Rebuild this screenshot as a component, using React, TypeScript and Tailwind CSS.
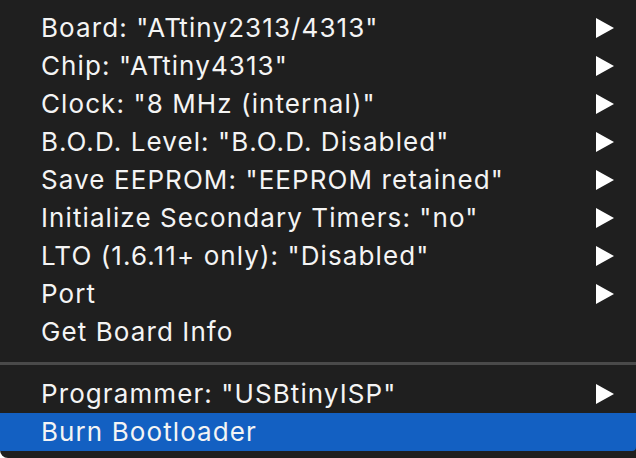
import React from 'react';

const boardItems = [
  { label: 'Board: "ATtiny2313/4313"', sub: true },
  { label: 'Chip: "ATtiny4313"', sub: true },
  { label: 'Clock: "8 MHz (internal)"', sub: true },
  { label: 'B.O.D. Level: "B.O.D. Disabled"', sub: true },
  { label: 'Save EEPROM: "EEPROM retained"', sub: true },
  { label: 'Initialize Secondary Timers: "no"', sub: true },
  { label: 'LTO (1.6.11+ only): "Disabled"', sub: true },
  { label: 'Port', sub: true },
  { label: 'Get Board Info', sub: false },
];

function Arrow() {
  return (
    <svg width="18" height="20" viewBox="0 0 18 20" className="shrink-0">
      <path d="M0 0 L18 10 L0 20 Z" fill="#ffffff" />
    </svg>
  );
}

function Row({ label, sub, active }: { label: string; sub: boolean; active?: boolean }) {
  return (
    <div
      className={`flex h-[38px] items-center justify-between pl-[41px] pr-[22px] ${
        active ? 'bg-[#1360c2] rounded-br-[4px]' : ''
      }`}
    >
      <span className="text-[26px] leading-none tracking-[0.042em] text-[#f4f4f4] whitespace-nowrap">{label}</span>
      {sub && <Arrow />}
    </div>
  );
}

export default function App() {
  return (
    <div
      className="w-[636px] h-[458px] bg-[#1f1f1f] overflow-hidden rounded-bl-[8px]"
      style={{ fontFamily: 'Inter, "Liberation Sans", sans-serif' }}
    >
      <div className="pt-[9px]">
        {boardItems.map((item) => (
          <Row key={item.label} label={item.label} sub={item.sub} />
        ))}
        <div className="mt-[11px] mb-[10px] h-[3px] bg-[#4a4a4a]" />
        <Row label={'Programmer: "USBtinyISP"'} sub />
        <Row label="Burn Bootloader" sub={false} active />
      </div>
    </div>
  );
}
